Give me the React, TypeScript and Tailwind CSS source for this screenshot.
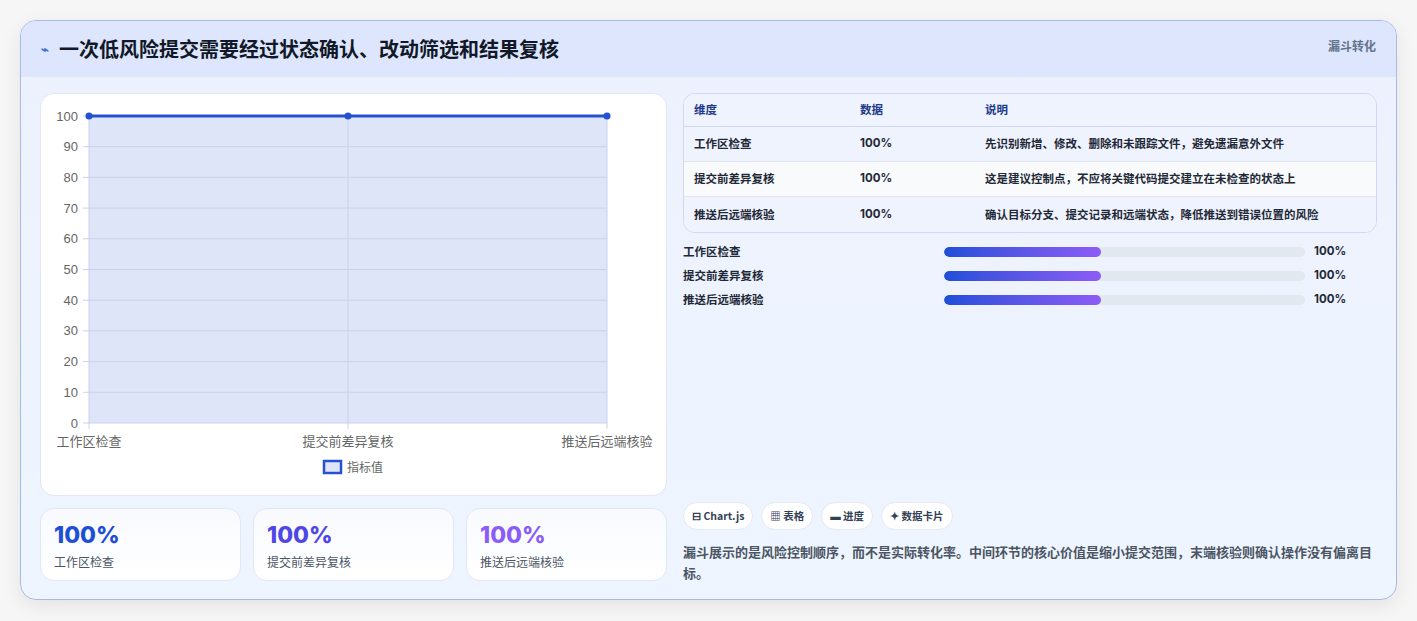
const font = { fontFamily: '"Noto Sans CJK SC", "Noto Sans", sans-serif' };

const rows = [
  { name: "工作区检查", value: "100%", note: "先识别新增、修改、删除和未跟踪文件，避免遗漏意外文件" },
  { name: "提交前差异复核", value: "100%", note: "这是建议控制点，不应将关键代码提交建立在未检查的状态上" },
  { name: "推送后远端核验", value: "100%", note: "确认目标分支、提交记录和远端状态，降低推送到错误位置的风险" },
];

function Chart() {
  const x0 = 48, x1 = 566, y0 = 22, y1 = 329;
  const ticks = [100, 90, 80, 70, 60, 50, 40, 30, 20, 10, 0];
  const xs = [x0, (x0 + x1) / 2, x1];
  const labels = ["工作区检查", "提交前差异复核", "推送后远端核验"];
  return (
    <svg width="625" height="401" className="block">
      <rect x={x0} y={y0} width={x1 - x0} height={y1 - y0} fill="#dfe5f8" />
      {ticks.map((t, i) => {
        const y = y0 + ((y1 - y0) * i) / 10;
        return (
          <g key={t}>
            <line x1={x0 - 6} x2={x1} y1={y} y2={y} stroke="#c9d2ea" strokeWidth="1" />
            <text x={x0 - 11} y={y + 4.5} textAnchor="end" fontSize="13" fill="#666" fontFamily="Liberation Sans, sans-serif">{t}</text>
          </g>
        );
      })}
      {xs.map((x, i) => (
        <g key={i}>
          <line x1={x} x2={x} y1={y0} y2={y1 + 6} stroke="#c9d2ea" />
          <text x={x} y={y1 + 23} textAnchor="middle" fontSize="13" fill="#666" style={font}>{labels[i]}</text>
        </g>
      ))}
      <line x1={x0} x2={x1} y1={y0} y2={y0} stroke="#2451d0" strokeWidth="3" />
      {xs.map((x, i) => (
        <circle key={i} cx={x} cy={y0} r="3.5" fill="#2451d0" />
      ))}
      <rect x="283" y="367" width="17" height="12" fill="#dfe5f8" stroke="#2451d0" strokeWidth="2.5" />
      <text x="306" y="378" fontSize="12" fill="#666" style={font}>指标值</text>
    </svg>
  );
}

export default function App() {
  return (
    <div className="w-[1417px] h-[621px] bg-[#f6f6f6] pt-[20px] pl-[20px]" style={font}>
      <div className="w-[1377px] h-[580px] rounded-[16px] border border-[#aab8e6] overflow-hidden bg-gradient-to-b from-[#edf1fd] to-[#eef5ff] shadow-[0_6px_20px_rgba(0,0,0,0.08)]">
        <div className="h-[56px] bg-[#dde6fd] flex items-center justify-between px-[20px]">
          <div className="flex items-center gap-[10px]">
            <span className="text-[#3b6fd8] text-[13px] font-bold">⌁</span>
            <span className="text-[20px] font-bold text-[#111827]">一次低风险提交需要经过状态确认、改动筛选和结果复核</span>
          </div>
          <span className="self-start mt-[16px] text-[12px] font-bold text-[#64748b]">漏斗转化</span>
        </div>
        <div className="flex gap-[16px] px-[19px] pt-[16px]">
          <div className="w-[627px] flex flex-col gap-[12px]">
            <div className="bg-white rounded-[14px] border border-[#e1e7f5] overflow-hidden">
              <Chart />
            </div>
            <div className="grid grid-cols-3 gap-[12px]">
              {[
                ["工作区检查", "text-[#1d4ed8]"],
                ["提交前差异复核", "text-[#4f46e5]"],
                ["推送后远端核验", "text-[#8b5cf6]"],
              ].map(([n, c]) => (
                <div key={n} className="h-[73px] rounded-[14px] border border-[#e1e7f5] bg-gradient-to-b from-[#f8faff] to-white px-[13px] pt-[12px]">
                  <div className={`text-[23px] font-extrabold leading-[28px] ${c}`} style={{ fontFamily: "Inter, sans-serif" }}>100%</div>
                  <div className="text-[12px] text-[#4b5563] mt-[4px]">{n}</div>
                </div>
              ))}
            </div>
          </div>
          <div className="w-[694px] flex flex-col">
            <div className="rounded-[12px] border border-[#cfd8ee] overflow-hidden text-[11.5px] text-[#1f2937]">
              <div className="flex h-[33px] items-center bg-[#eef3fd] border-b border-[#cfd8ee] text-[#1e3a8a] font-bold">
                <div className="w-[176px] pl-[10px]">维度</div>
                <div className="w-[125px]">数据</div>
                <div>说明</div>
              </div>
              {rows.map((r, i) => (
                <div key={r.name} className={`flex h-[35px] items-center font-bold ${i === 1 ? "bg-[#f8fafc]" : "bg-[#eff3fe]"} ${i < 2 ? "border-b border-[#dfe5f3]" : ""}`}>
                  <div className="w-[176px] pl-[10px]">{r.name}</div>
                  <div className="w-[125px]" style={{ fontFamily: "Inter, sans-serif" }}>{r.value}</div>
                  <div>{r.note}</div>
                </div>
              ))}
            </div>
            <div className="mt-[11px] flex flex-col gap-[8px]">
              {rows.map((r) => (
                <div key={r.name} className="flex items-center h-[16px] text-[11.5px] font-bold text-[#1f2937]">
                  <div className="w-[261px]">{r.name}</div>
                  <div className="w-[361px] h-[10px] rounded-full bg-[#e2e8f0] overflow-hidden">
                    <div className="h-full rounded-full bg-gradient-to-r from-[#1d4ed8] to-[#8b5cf6]" style={{ width: "43.5%" }} />
                  </div>
                  <div className="ml-[9px]" style={{ fontFamily: "Inter, sans-serif" }}>100%</div>
                </div>
              ))}
            </div>
            <div className="mt-[194px] flex gap-[8px]">
              {["⊟ Chart.js", "▦ 表格", "▬ 进度", "✦ 数据卡片"].map((c) => (
                <span key={c} className="h-[28px] px-[8px] flex items-center rounded-full bg-white border border-[#e3e8f3] text-[10.5px] font-bold text-[#334155]">{c}</span>
              ))}
            </div>
            <p className="mt-[11px] text-[13px] leading-[21px] font-bold text-[#4b5563]">
              漏斗展示的是风险控制顺序，而不是实际转化率。中间环节的核心价值是缩小提交范围，末端核验则确认操作没有偏离目标。
            </p>
          </div>
        </div>
      </div>
    </div>
  );
}
